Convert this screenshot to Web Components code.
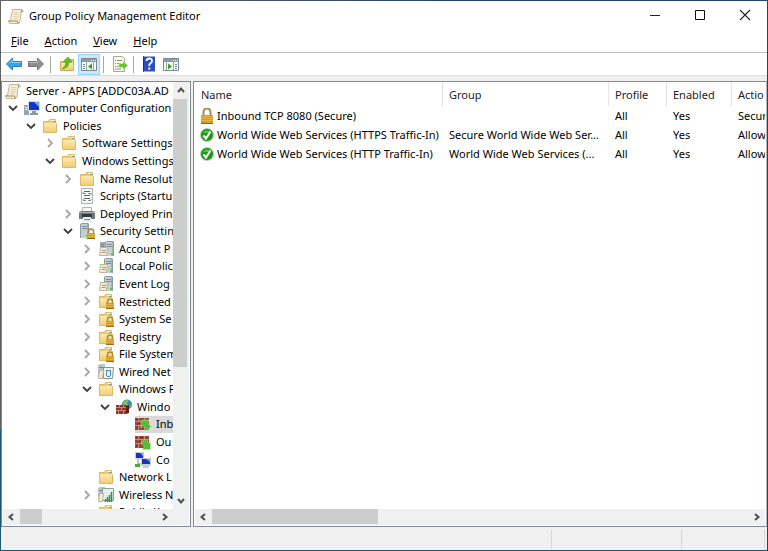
<!DOCTYPE html>
<html lang="en">
<head>
<meta charset="utf-8">
<title>Group Policy Management Editor</title>
<style>
html, body { height: 100%; margin: 0; }
body { overflow: hidden; font: 11px/18px "Noto Sans", "Open Sans", sans-serif; color: #000; background: #1c5872; }
</style>
</head>
<body>
<gp-window></gp-window>
<script>
const FOLDER = `<path d="M1.5 3.500h5l1-2h6v4h1v9h-13z" fill="#eccb78" stroke="#dcb964"/><path d="M9 2.500h4" stroke="#fff8de"/><path d="M11 3.500h2.500" stroke="#5aa0c8"/><path d="M2 5h12v9H2z" fill="url(#fold)"/>`;
const LOCK = `<path d="M9.500 10V8.500a2.500 2.500 0 0 1 5 0V10" fill="none" stroke="#a88a3a" stroke-width="1.500"/><path d="M8 10h8v6H8z" fill="#d29a1e"/><path d="M8 11.500h8M8 13.500h8" stroke="#e3b445"/><path d="M8 15.500h8" stroke="#9a6c10"/>`;
const SERVER = `<path d="M6 1l2-1h6l1 1v14H6z" fill="#8d9ba4"/><path d="M7 1h7v14H7z" fill="#c3ced3"/><path d="M8 3.500h5M8 5.500h5" stroke="#7d8c95"/><path d="M13.500 1v14" stroke="#a3b0b7"/><path d="M12 12h2v2h-2z" fill="#4fd329"/>`;
const SHEET = `<path d="M2.500 6.500h7l-1 8h-7z" fill="#f3ecd3" stroke="#bdb597"/><path d="M4 9.500h4M3.500 11.500h4" stroke="#a39b80"/>`;
const BRICK = `<path d="M0 2h14v12H0z" fill="#9c4637"/><path d="M0 5.500h14M0 9.500h14M3.500 2v3M9.500 2v3M6.500 6v3M12.500 6v3M3.500 10v4M9.500 10v4" stroke="#c98f7e"/><path d="M1 3.500h2M4 7.500h2M1 11.500h2M5 3.500h3" stroke="#7a2c20"/>`;
const SCROLL = `<path d="M4.500 1.500h9q2 0 1.500 2.500h-2l-1 9.500q-.500 2-2 2h-8q-2-.500-1.500-3h2z" fill="#f6efd8" stroke="#c4b692"/><path d="M6 4.500h5M6 6.500h5M5.500 8.500h5M5 10.500h5" stroke="#ddd2b4"/><path d="M12.500 1.500q2 .500 1 2.500M1 13h8.500q0 2 1.500 2" fill="none" stroke="#94865e"/>`;
const WIN = `<path d="M.5 2.500h15v12H.5z" fill="#f4f6f7" stroke="#7d8990"/><path d="M1 3h14v3H1z" fill="#8a9aa6"/><path d="M10 4.500h1M12 4.500h1M14 4.500h1" stroke="#fff"/>`;
const ICONS = {
  folder: FOLDER,
  folderlock: FOLDER + LOCK,
  scroll: SCROLL,
  computer: `<path d="M0 5h5v10H0z" fill="#97a5ad"/><path d="M1 7.500h3M1 9.500h3" stroke="#e6edf0"/><path d="M4 1h12v10H4z" fill="#d7dde2"/><path d="M5 2h10v8H5z" fill="#1438c4"/><path d="M10 2h5v5z" fill="#7ea4f4"/><path d="M8 11h4v2h2v2H6v-2h2z" fill="#8b979f"/>`,
  script: `<path d="M2.500.5h11v15h-11z" fill="#fafafa" stroke="#aab0b4"/><path d="M5 3.500h6M4.500 5.500h2M9.500 5.500h2M5 7.500h6M5 10.500h6M4.500 12.500h2M9.500 12.500h2" stroke="#5b6368"/><path d="M4 4v2M12 5v2M4 11v1M12 11v1" stroke="#8a9297"/>`,
  printer: `<path d="M3.500 1.500h9v4h-9z" fill="#f7f7f7" stroke="#b7b7b7"/><path d="M0 6l2-1h12l2 1v7H0z" fill="#73787c"/><path d="M0 6.500h16" stroke="#a9aeb1"/><path d="M3 8h10v4H3z" fill="#35393c"/><path d="M4 11h8l1 5H3z" fill="#e4eef6"/><path d="M5 13.500h3" stroke="#2ba8e0"/><path d="M8 13.500h3" stroke="#38b13a"/>`,
  serverlock: `<g transform="translate(-5 0)">${SERVER}</g>` + LOCK,
  policies2: `<path d="M2 1h5v12H2z" fill="#9fadb5"/><path d="M3 3.500h3M3 5.500h3" stroke="#6f808a"/><g transform="translate(1 0)">${SERVER}</g>` + SHEET,
  policy: SERVER + SHEET,
  wired: `<path d="M0 1l2-1h5v14H0z" fill="#b9c5cb"/><path d="M1 3.500h5" stroke="#71828b"/><path d="M5.500 3.500h10l-1 11h-9z" fill="#edf2ee" stroke="#86949b"/><path d="M8 6.500h5M8.500 7v5M12.500 7v5M9 12.500h3" stroke="#4f8cc4"/><path d="M1.500 6.500h4l-1 8h-4z" fill="#f3ecd3" stroke="#bdb597"/>`,
  wireless: `<path d="M0 1l2-1h5v14H0z" fill="#b9c5cb"/><path d="M1 3.500h5" stroke="#71828b"/><path d="M4.500 1.500h11v12h-11z" fill="#e6efe9" stroke="#8fa0a0"/><path d="M1.500 6.500h4l-1 8h-4z" fill="#f3ecd3" stroke="#bdb597"/><path d="M7.500 15v-3M9.500 15v-5M11.500 15V8M13.500 15V5" stroke="#259245" stroke-width="1.500"/>`,
  firewall: `<circle cx="11" cy="5.500" r="5" fill="#2c86d4"/><path d="M8 2q3-2 5 0l-2 2 1 2-3 1-2-2z" fill="#79c84c"/><path d="M14 5l2 1-2 3-1-2z" fill="#5fb53f"/><path d="M0 6h10v9H0z" fill="#8f3527"/><path d="M10 7l3-1v8l-3 1z" fill="#61201a"/><path d="M0 8.500h10M0 11.500h10M3.500 6v2M7.500 6v2M5.500 9v2M2.500 12v3M7.500 12v3" stroke="#c58674"/>`,
  inbound: BRICK + `<path d="M6 4h8l-2 2.500 4 4-3.500 4-4.500-5L6 12z" fill="#4cbf34" stroke="#b9efac" stroke-width=".5"/>`,
  outbound: BRICK + `<path d="M15.500 15.500H7l2.500-2.500-3.500-4 4-4 4 4.500 1.500-2z" fill="#4cbf34" stroke="#b9efac" stroke-width=".5"/>`,
  network: `<path d="M0 0h9v7H0z" fill="#c6ced6"/><path d="M1 1h7v5H1z" fill="#1c34bd"/><path d="M5 1h3v3z" fill="#7c9cf0"/><path d="M3 7v5h4" fill="none" stroke="#7b878f"/><path d="M0 12h5v3H0z" fill="#3fae2c"/><path d="M6 6h10v8H6z" fill="#c6ced6"/><path d="M7 7h8v5H7z" fill="#1c34bd"/><path d="M11 7h4v3z" fill="#7c9cf0"/><path d="M8 15h6" stroke="#8b979f"/>`,
  lock: `<path d="M4.500 7V4a3.500 3.500 0 0 1 7 0v3" fill="none" stroke="#a4885a" stroke-width="2"/><path d="M2 7h12v9H2z" fill="#d79c22"/><path d="M2 8.500h12M2 10.500h12M2 12.500h12" stroke="#e5b549"/><path d="M2 15.500h12" stroke="#93671a"/>`,
  ok: `<circle cx="8" cy="8" r="6.500" fill="#199a17" stroke="#c5cdc4"/><path d="M4 6a4.500 4.500 0 0 1 8 0z" fill="#57c44c"/><path d="M4.500 8.500l2.500 3L11.500 4.500" fill="none" stroke="#fff" stroke-width="2"/>`,
  back: `<path d="M.5 8l6-6v3.500h9v5h-9V14z" fill="#36a5e2" stroke="#2680bd"/><path d="M3 7.500l3-3v2h9" fill="none" stroke="#8fd6f7"/>`,
  forward: `<path d="M15.500 8l-6-6v3.500h-9v5h9V14z" fill="#8e8e8e" stroke="#747474"/><path d="M1 6.500h9v-2" fill="none" stroke="#bdbdbd"/>`,
  up: `<path d="M1.500 5.500h4l1-2h8v11h-13z" fill="#ecc974" stroke="#d1ab55"/><path d="M2 7h12v7H2z" fill="url(#fold)"/><path d="M3 13q4-3 4-7H4l5-5 4 5h-3q0 6-7 7z" fill="#5cc21f" stroke="#3c9412" stroke-width=".5"/>`,
  treepane: WIN + `<path d="M1 7h4v7H1z" fill="#fff"/><path d="M2 8.500h2M2 10.500h2M2 12.500h2" stroke="#6f8491"/><path d="M5.500 6v8M12.500 6v8" stroke="#98a4ab"/><path d="M11 7.500v6l-4-3z" fill="#35a51b"/>`,
  export: `<path d="M1.500.5h9l2 2v13h-11z" fill="#fbf9ec" stroke="#aaa68f"/><path d="M3 4.500h1M5 4.500h5M3 7.500h1M5 7.500h4M3 10.500h1M5 10.500h4M3 13h6" stroke="#8f8d7c"/><path d="M7 7.500h4V5l5 4.500-5 4.500v-2.500H7z" fill="#62c630" stroke="#eefbe6" stroke-width=".5"/>`,
  help: `<path d="M2 .5h12v15H2z" fill="#2c50bb"/><path d="M2.500.5v15" stroke="#17307c"/><path d="M5.500 5q0-2.500 2.800-2.500T11 5q0 1.300-1.500 2.300T8.200 10" fill="none" stroke="#fff" stroke-width="1.800"/><path d="M7.300 11.500h2v2h-2z" fill="#fff"/>`,
  actionpane: WIN + `<path d="M11 7h4v7h-4z" fill="#fff"/><path d="M12 8.500h2M12 10.500h2M12 12.500h2" stroke="#6f8491"/><path d="M3.500 6v8M10.500 6v8" stroke="#98a4ab"/><path d="M5 7.500v6l4-3z" fill="#35a51b"/>`,
  min: `<path d="M3 7.500h10" stroke="#222"/>`,
  max: `<path d="M3.500 2.500h9v9h-9z" fill="none" stroke="#111"/>`,
  close: `<path d="M3 2l10 10M13 2L3 12" stroke="#222" stroke-width="1.100"/>`,
  left: `<path d="M10 5L6.500 8l3.500 3" fill="none" stroke="#505050" stroke-width="2"/>`,
  right: `<path d="M6 5l3.500 3L6 11" fill="none" stroke="#505050" stroke-width="2"/>`,
  top: `<path d="M5 10l3-3.500 3 3.500" fill="none" stroke="#505050" stroke-width="2"/>`,
  bottom: `<path d="M5 6l3 3.500L11 6" fill="none" stroke="#505050" stroke-width="2"/>`,
  open: `<path d="M4 6l4 4 4-4" fill="none" stroke="#404040" stroke-width="1.800"/>`,
  shut: `<path d="M6 4l4 4-4 4" fill="none" stroke="#a6a6a6" stroke-width="1.800"/>`
};

class GpElement extends HTMLElement {
  connectedCallback() {
    if (this.shadowRoot) return;
    this.attachShadow({ mode: 'open' }).innerHTML = `<style>
      *{box-sizing:border-box} button{font:inherit;color:inherit;border:0;background:none;padding:0;margin:0}
      :host{box-sizing:border-box}
      ${this.styles()}</style>${this.markup()}`;
  }
}

customElements.define('gp-icon', class extends GpElement {
  styles() { return `:host{display:block;flex:none;width:16px;height:16px} svg{display:block;width:100%;height:100%}`; }
  markup() {
    return `<svg viewBox="0 0 16 16" aria-hidden="true"><defs><linearGradient id="fold" x2="0" y2="1"><stop stop-color="#fde9ae"/><stop offset="1" stop-color="#f3cd74"/></linearGradient></defs>${ICONS[this.getAttribute('name')]}</svg>`;
  }
});

customElements.define('gp-titlebar', class extends GpElement {
  styles() { return `:host{display:flex;align-items:center;height:29px;padding-left:7px}
    h1{flex:1;margin:0 0 0 5px;font:inherit}
    button{width:45px;height:29px;display:grid;place-items:center}`; }
  markup() {
    return `<gp-icon name="scroll"></gp-icon><h1><slot></slot></h1>
      <button aria-label="Minimize"><gp-icon name="min"></gp-icon></button>
      <button aria-label="Maximize"><gp-icon name="max"></gp-icon></button>
      <button aria-label="Close"><gp-icon name="close"></gp-icon></button>`;
  }
});

customElements.define('gp-menubar', class extends GpElement {
  styles() { return `:host{display:flex;gap:16px;height:22px;padding:2px 10px 0}
    button{height:18px;line-height:18px}`; }
  markup() {
    return ['File', 'Action', 'View', 'Help'].map(t => `<button><u>${t[0]}</u>${t.slice(1)}</button>`).join('');
  }
});

customElements.define('gp-toolbar', class extends GpElement {
  styles() { return `:host{display:flex;align-items:center;height:24px;padding-left:2px;border-top:1px solid #bdbdbd;border-bottom:1px solid #dcdcdc}
    button{width:22px;height:21px;display:grid;place-items:center}
    button[aria-pressed=true]{background:#cce8ff;box-shadow:inset 0 0 0 1px #99d1ff}
    i{width:1px;height:17px;background:#a8a8a8;margin:0 5px 0 3px}
    i:last-of-type{margin:0 4px 0 2px}`; }
  markup() {
    const b = (n, l, p = '') => `<button aria-label="${l}" ${p}><gp-icon name="${n}"></gp-icon></button>`;
    return b('back', 'Back') + b('forward', 'Forward') + '<i></i>' + b('up', 'Up one level') +
      b('treepane', 'Show console tree', 'aria-pressed="true"') + '<i></i>' + b('export', 'Export list') +
      '<i></i>' + b('help', 'Help') + b('actionpane', 'Show action pane');
  }
});

customElements.define('gp-scrollbar', class extends GpElement {
  get vertical() { return this.getAttribute('orientation') === 'vertical'; }
  styles() {
    const v = this.vertical;
    return `:host{display:flex;flex-direction:${v ? 'column' : 'row'};background:#f0f0f0;${v ? 'width:16px' : 'height:16px'}}
      button{width:16px;height:16px;flex:none}
      div{flex:1;min-${v ? 'height' : 'width'}:0;padding-${v ? 'top' : 'left'}:1px}
      span{display:block;background:#cdcdcd;${v ? 'height' : 'width'}:${this.getAttribute('thumb')};${v ? 'width:14px' : 'height:15px'}}`;
  }
  markup() {
    const v = this.vertical;
    return `<button aria-label="${v ? 'Scroll up' : 'Scroll left'}"><gp-icon name="${v ? 'top' : 'left'}"></gp-icon></button><div><span></span></div>
      <button aria-label="${v ? 'Scroll down' : 'Scroll right'}"><gp-icon name="${v ? 'bottom' : 'right'}"></gp-icon></button>`;
  }
});

customElements.define('gp-node', class extends GpElement {
  styles() {
    const pad = [2, 2, 20, 39, 57, 76, 94, 113][this.getAttribute('level')];
    return `:host{display:flex;align-items:center;min-height:0;padding-left:${pad}px;white-space:nowrap}
      .toggle{width:19px;height:16px;flex:none}
      .label{display:flex;align-items:center;flex:1;height:100%;gap:5px}
      :host([selected]) .label{background:#d9d9d9}`;
  }
  markup() {
    const s = this.getAttribute('state');
    const t = this.getAttribute('level') === '0' ? '' : s
      ? `<button class="toggle" aria-label="${s === 'open' ? 'Collapse' : 'Expand'}"><gp-icon name="${s}"></gp-icon></button>`
      : '<span class="toggle"></span>';
    return `${t}<span class="label"><gp-icon name="${this.getAttribute('icon')}"></gp-icon><span><slot></slot></span></span>`;
  }
});

const NODES = [
  [0, '', 'scroll', 'Server - APPS [ADDC03A.AD'],
  [1, 'open', 'computer', 'Computer Configuration'],
  [2, 'open', 'folder', 'Policies'],
  [3, 'shut', 'folder', 'Software Settings'],
  [3, 'open', 'folder', 'Windows Settings'],
  [4, 'shut', 'folder', 'Name Resolut'],
  [4, '', 'script', 'Scripts (Startu'],
  [4, 'shut', 'printer', 'Deployed Prin'],
  [4, 'open', 'serverlock', 'Security Settin'],
  [5, 'shut', 'policies2', 'Account P'],
  [5, 'shut', 'policy', 'Local Polic'],
  [5, 'shut', 'policy', 'Event Log'],
  [5, 'shut', 'folderlock', 'Restricted'],
  [5, 'shut', 'folderlock', 'System Se'],
  [5, 'shut', 'folderlock', 'Registry'],
  [5, 'shut', 'folderlock', 'File System'],
  [5, 'shut', 'wired', 'Wired Net'],
  [5, 'open', 'folder', 'Windows F'],
  [6, 'open', 'firewall', 'Windo'],
  [7, '', 'inbound', 'Inb', true],
  [7, '', 'outbound', 'Ou'],
  [7, '', 'network', 'Co'],
  [5, '', 'folder', 'Network L'],
  [5, 'shut', 'wireless', 'Wireless N'],
  [5, '', 'folder', 'Public Key']
];

customElements.define('gp-tree', class extends GpElement {
  styles() { return `:host{display:grid;grid-template:minmax(0,1fr) 16px/minmax(0,1fr) 16px;padding:0 1px 1px;background:#fff;overflow:hidden}
    .view{overflow:hidden} .list{display:grid;grid-auto-rows:minmax(0,1fr);height:439px}
    .corner{background:#f0f0f0}`; }
  markup() {
    return `<div class="view"><div class="list" role="tree">${NODES.map(([l, s, i, t, sel]) =>
      `<gp-node role="treeitem" level="${l}" state="${s}" icon="${i}" ${sel ? 'selected' : ''}>${t}</gp-node>`).join('')}</div></div>
      <gp-scrollbar orientation="vertical" thumb="68%"></gp-scrollbar>
      <gp-scrollbar orientation="horizontal" thumb="16%"></gp-scrollbar><div class="corner"></div>`;
  }
});

const RULES = [
  ['lock', 'Inbound TCP 8080 (Secure)', '', 'All', 'Yes', 'Secur'],
  ['ok', 'World Wide Web Services (HTTPS Traffic-In)', 'Secure World Wide Web Ser...', 'All', 'Yes', 'Allow'],
  ['ok', 'World Wide Web Services (HTTP Traffic-In)', 'World Wide Web Services (...', 'All', 'Yes', 'Allow']
];

customElements.define('gp-rules', class extends GpElement {
  styles() { return `:host{display:flex;flex-direction:column;padding:0 1px 1px;background:#fff;overflow:hidden;min-width:0}
    .view{flex:1;overflow:hidden;min-height:0}
    table{border-collapse:separate;border-spacing:0;table-layout:fixed;width:100%}
    th,td{padding:0 0 0 6px;text-align:left;font-weight:400;white-space:nowrap;overflow:hidden}
    th{height:24px;padding-top:2px;color:#222;border-right:1px solid #e3e3e3;line-height:22px}
    th:last-child{border:0}
    td{height:19px;line-height:18px}
    td:first-child{padding-left:4px}
    div.name{display:flex;align-items:center;gap:2px;height:18px}
    .n{width:248px}.g{width:166px}.p{width:58px}.e{width:65px}`; }
  markup() {
    return `<div class="view"><table><thead><tr><th class="n">Name</th><th class="g">Group</th><th class="p">Profile</th><th class="e">Enabled</th><th>Actio</th></tr></thead>
      <tbody>${RULES.map(([i, n, ...c]) => `<tr><td><div class="name"><gp-icon name="${i}"></gp-icon>${n}</div></td>${c.map(x => `<td>${x}</td>`).join('')}</tr>`).join('')}</tbody></table></div>
      <gp-scrollbar orientation="horizontal" thumb="31%"></gp-scrollbar>`;
  }
});

customElements.define('gp-statusbar', class extends GpElement {
  styles() { return `:host{display:grid;grid-template-columns:1fr 130px 83px 2px;height:22px;padding:2px 0 1px;background:#f0f0f0}
    span{border-right:1px solid #d7d7d7}span:last-child{border:0}`; }
  markup() { return '<span></span><span></span><span></span><span></span>'; }
});

customElements.define('gp-window', class extends GpElement {
  styles() { return `:host{display:block;height:100vh;padding:1px;background:
      linear-gradient(90deg,#666 0,#4a5566 30%,#24436b 60%,#24436b) top/100% 1px no-repeat,
      linear-gradient(#606060 430px,#1c5872 430px) left/1px 100% no-repeat,
      linear-gradient(#24436b,#24436b) right/2px 100% no-repeat,#1c5872}
    main{display:flex;flex-direction:column;height:100%;background:#fff}
    .work{flex:1;display:grid;grid-template:minmax(0,1fr)/190px minmax(0,1fr);gap:2px;min-height:0;padding:5px 0 1px;background:#f0f0f0}
    gp-tree,gp-rules{border:1px solid #828790}
    gp-rules{border-right-color:#b4b8c0}`; }
  markup() {
    return `<main><gp-titlebar>Group Policy Management Editor</gp-titlebar><gp-menubar></gp-menubar><gp-toolbar></gp-toolbar>
      <div class="work"><gp-tree></gp-tree><gp-rules></gp-rules></div><gp-statusbar></gp-statusbar></main>`;
  }
});
</script>
</body>
</html>
